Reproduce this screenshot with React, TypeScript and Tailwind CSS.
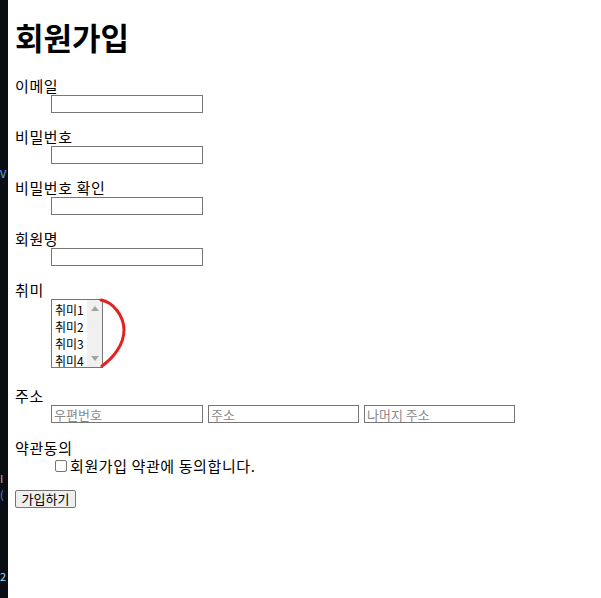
import React from "react"

const font = { fontFamily: '"Noto Sans CJK KR", "Noto Sans", sans-serif' }

const TextInput = ({ placeholder, w = "w-[152px]" }: { placeholder?: string; w?: string }) => (
  <input
    type="text"
    placeholder={placeholder}
    className={`${w} h-[18px] border border-[#767676] bg-white px-[2px] text-[13px] leading-[16px] text-black placeholder:text-[#8a8a8a] outline-none`}
  />
)

const Field = ({ label, children, className = "" }: { label: string; children: React.ReactNode; className?: string }) => (
  <div className={className}>
    <div className="h-[18px] text-[15px] leading-[18px] tracking-[0.6px]">{label}</div>
    <div className="ml-[36px] flex">{children}</div>
  </div>
)

export default function App() {
  const hobbies = ["취미1", "취미2", "취미3", "취미4"]

  return (
    <div className="relative flex h-[598px] w-[601px] bg-white text-black" style={font}>
      {/* left edge of some other window */}
      <div className="flex w-[8px] shrink-0 flex-col bg-[#0a0e14] text-[11px] leading-[12px]">
        <span className="mt-[167px] text-[#5ab0e8]">V</span>
        <span className="mt-[293px] text-[#d0a0b0]">I</span>
        <span className="mt-[4px] text-[#4a90e0]">(</span>
        <span className="mt-[70px] text-[#b8d8f0]">2</span>
      </div>

      <div className="flex flex-col pl-[7px]">
        <h1 className="mt-[17px] h-[40px] text-[31px] font-bold leading-[40px]">회원가입</h1>

        <Field label="이메일" className="mt-[20px]">
          <TextInput />
        </Field>
        <Field label="비밀번호" className="mt-[15px]">
          <TextInput />
        </Field>
        <Field label="비밀번호 확인" className="mt-[15px]">
          <TextInput />
        </Field>
        <Field label="회원명" className="mt-[15px]">
          <TextInput />
        </Field>

        <Field label="취미" className="mt-[15px]">
          <div className="flex h-[69px] w-[52px] border border-[#767676] bg-white">
            <div className="flex flex-1 flex-col pl-[3px] pt-[1px] text-[12px] leading-[17px]">
              {hobbies.map((h) => (
                <span key={h}>{h}</span>
              ))}
            </div>
            <div className="flex w-[15px] flex-col items-center justify-between bg-[#f0f0f0] py-[6px]">
              <svg width="8" height="5" viewBox="0 0 8 5">
                <path d="M0 5 L4 0 L8 5 Z" fill="#a3a3a3" />
              </svg>
              <svg width="8" height="5" viewBox="0 0 8 5">
                <path d="M0 0 L4 5 L8 0 Z" fill="#a3a3a3" />
              </svg>
            </div>
          </div>
        </Field>

        <Field label="주소" className="mt-[19px]">
          <div className="flex gap-[5px]">
            <TextInput placeholder="우편번호" />
            <TextInput placeholder="주소" w="w-[151px]" />
            <TextInput placeholder="나머지 주소" w="w-[151px]" />
          </div>
        </Field>

        <div className="mt-[16px] h-[18px] text-[15px] leading-[18px] tracking-[0.6px]">약관동의</div>
        <label className="ml-[40px] flex h-[18px] items-center gap-[3px] text-[15px] leading-[18px] tracking-[0.6px]">
          <span className="h-[12px] w-[12px] shrink-0 rounded-[2px] border border-[#767676] bg-white" />
          회원가입 약관에 동의합니다.
        </label>

        <div className="mt-[10px]">
          <button className="h-[18px] w-[61px] rounded-[2px] border border-[#767676] bg-[#efefef] text-[13px] leading-[16px]">
            가입하기
          </button>
        </div>
      </div>

      {/* red annotation stroke */}
      <svg className="pointer-events-none absolute left-0 top-0" width="601" height="598">
        <path
          d="M101 300 C 113 302, 124 316, 124 330 C 124 345, 113 358, 102 366"
          fill="none"
          stroke="#e42222"
          strokeWidth="3"
          strokeLinecap="round"
        />
      </svg>
    </div>
  )
}
